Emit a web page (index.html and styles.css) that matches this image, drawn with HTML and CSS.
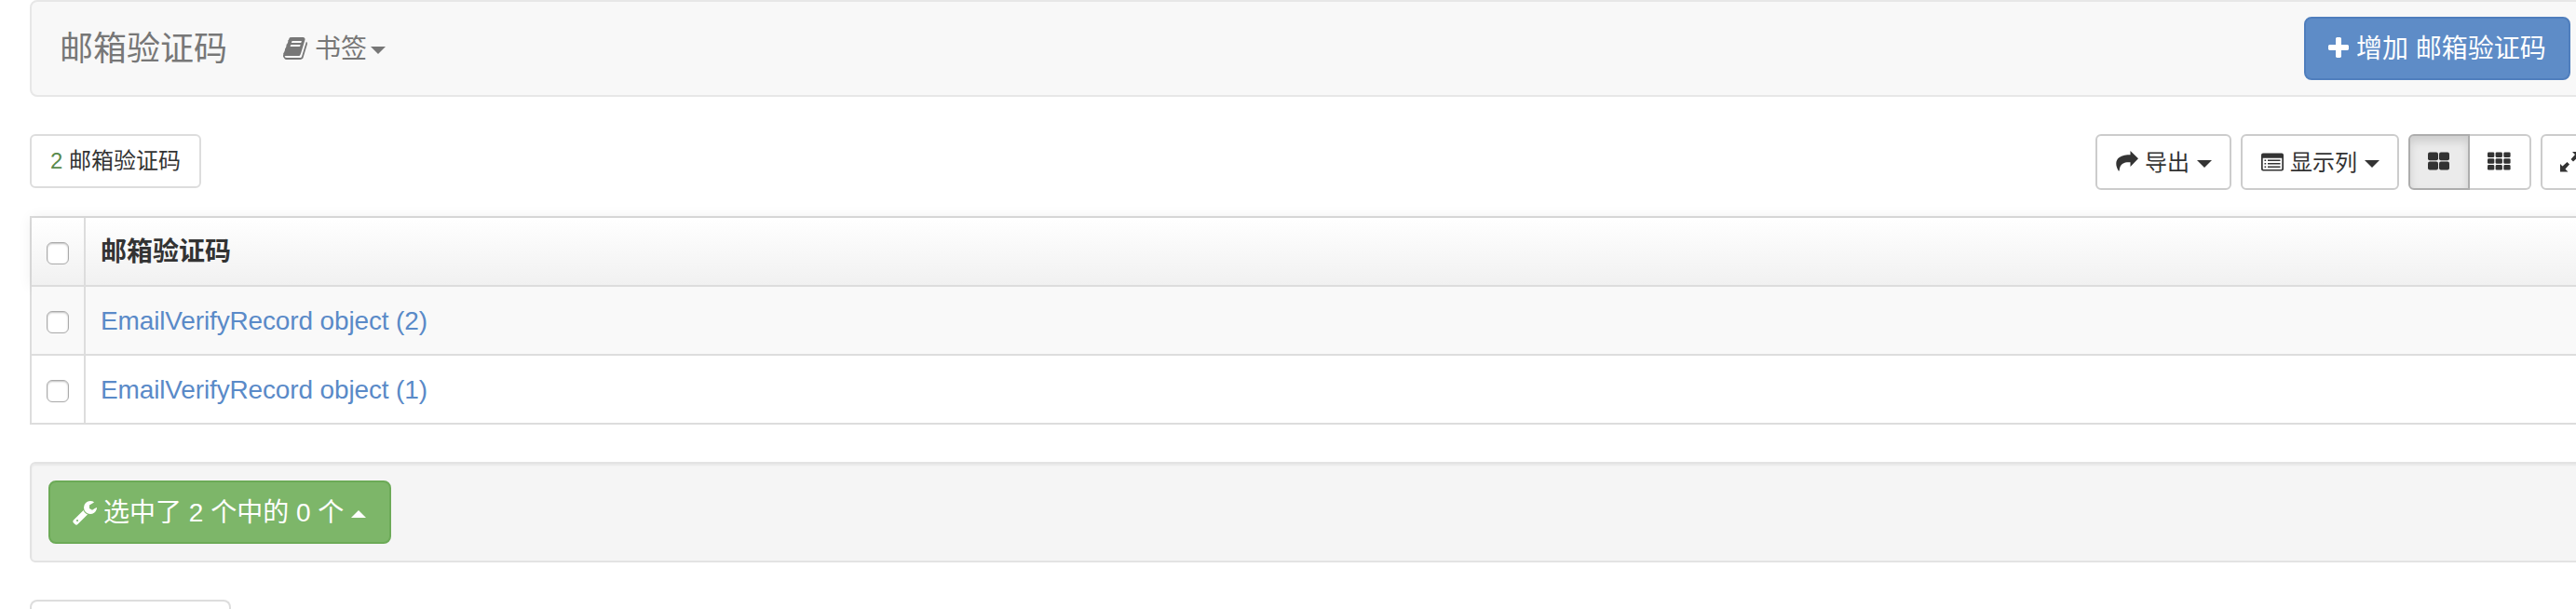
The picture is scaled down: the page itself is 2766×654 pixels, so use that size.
FILE: index.html
```html
<!DOCTYPE html>
<html lang="zh-CN">
<head>
<meta charset="utf-8">
<title>邮箱验证码</title>
<link rel="stylesheet" href="styles.css">
</head>
<body>
<div class="page">
  <nav class="navbar">
    <span class="brand">邮箱验证码</span>
    <a class="bookmark">
      <svg class="icon-lg" viewBox="0 0 1792 1792"><path d="M1639 478q40 57 18 129l-275 906q-19 64-76.5 107.5t-122.5 43.5h-923q-77 0-148.5-53.5t-99.5-131.5q-24-67-2-127 0-4 3-27t4-37q1-8-3-21.5t-3-19.5q2-11 8-21t16.5-23.5 16.5-23.5q23-38 45-91.5t30-91.5q3-10 .5-30t-.5-28q3-11 17-28t17-23q21-36 42-92t25-90q1-9-2.500-32t.5-28q4-13 22-30.500t22-22.500q19-26 42.500-84.500t27.500-96.500q1-8-3-25.500t-2-26.500q2-8 9-18t18-23 17-21q8-12 16.500-30.500t15-35 16-36 19.500-32 26.500-23.500 36-11.500 47.500 5.500l-1 3q38-9 51-9h761q74 0 114 56t18 130l-274 906q-36 119-71.500 153.500t-128.500 34.500h-869q-27 0-38 15-11 16-1 43 24 70 144 70h923q29 0 56-15.500t35-41.500l300-987q7-22 5-57 38 15 59 43zm-1064 2q-4 13 2 22.500t20 9.500h608q13 0 25.500-9.500t16.500-22.500l21-64q4-13-2-22.500t-20-9.500h-608q-13 0-25.500 9.500t-16.500 22.500zm-83 256q-4 13 2 22.500t20 9.500h608q13 0 25.500-9.500t16.500-22.500l21-64q4-13-2-22.500t-20-9.500h-608q-13 0-25.500 9.500t-16.500 22.500z"/></svg>
      <span>书签</span><i class="caret"></i>
    </a>
    <a class="btn-lg add">
      <svg class="icon-plus" viewBox="192 128 1408 1408"><path d="M1600 736v192q0 40-28 68t-68 28h-416v416q0 40-28 68t-68 28h-192q-40 0-68-28t-28-68v-416h-416q-40 0-68-28t-28-68v-192q0-40 28-68t68-28h416v-416q0-40 28-68t68-28h192q40 0 68 28t28 68v416h416q40 0 68 28t28 68z"/></svg>
      <span>增加 邮箱验证码</span>
    </a>
  </nav>

  <div class="toolbar">
    <div class="count"><span class="num">2</span> 邮箱验证码</div>
    <div class="tools">
      <a class="btn export">
        <svg class="icon" viewBox="0 0 24 22"><path d="M15.500 4.300V0L24 8.300 15.500 17v-4.700C9.500 12 4.200 13 3.600 21.500H2.800C-.5 16-.8 10.500 3.300 7.200 6.500 4.700 11.500 4.300 15.500 4.300z"/></svg>
        <span>导出</span><i class="caret"></i>
      </a>
      <a class="btn columns">
        <svg class="icon" viewBox="0 0 24 22"><path fill-rule="evenodd" d="M2 1.500h20a2 2 0 0 1 2 2v15a2 2 0 0 1-2 2H2a2 2 0 0 1-2-2v-15a2 2 0 0 1 2-2zM1.700 6.800v11.400q0 .8.8.8h19q.8 0 .8-.8V6.800z"/><path d="M3.500 8.500h1.700v1.500H3.500zM7 8.500h13.500v1.500H7zM3.500 12h1.700v1.500H3.500zM7 12h13.500v1.500H7zM3.500 15.500h1.700V17H3.500zM7 15.500h13.500V17H7z"/></svg>
        <span>显示列</span><i class="caret"></i>
      </a>
      <div class="group">
        <a class="btn square active">
          <svg class="icon-grid" viewBox="0 0 24 20"><rect x="0" y=".5" width="11" height="8.700" rx="2"/><rect x="12" y=".5" width="11" height="8.700" rx="2"/><rect x="0" y="10.500" width="11" height="9" rx="2"/><rect x="12" y="10.500" width="11" height="9" rx="2"/></svg>
        </a>
        <a class="btn square">
          <svg class="icon-grid" viewBox="0 0 24 20"><rect x="0" y=".5" width="7.300" height="5.500" rx="1.300"/><rect x="8.600" y=".5" width="7.300" height="5.500" rx="1.300"/><rect x="17.300" y=".5" width="7.300" height="5.500" rx="1.300"/><rect x="0" y="7.300" width="7.300" height="5.500" rx="1.300"/><rect x="8.600" y="7.300" width="7.300" height="5.500" rx="1.300"/><rect x="17.300" y="7.300" width="7.300" height="5.500" rx="1.300"/><rect x="0" y="14.100" width="7.300" height="5.500" rx="1.300"/><rect x="8.600" y="14.100" width="7.300" height="5.500" rx="1.300"/><rect x="17.300" y="14.100" width="7.300" height="5.500" rx="1.300"/></svg>
        </a>
      </div>
      <a class="btn square">
        <svg class="icon-expand" viewBox="0 0 22 22"><path d="M0 13l2.500 2.500 5-4.500 2.500 2.500-4.500 5L8.500 21.500H0zM21.500 0v8.500L19 6l-5 4.500L11.500 8 16 3 13 0z"/></svg>
      </a>
    </div>
  </div>

  <table class="results">
    <thead>
      <tr><th class="check"><input type="checkbox"></th><th>邮箱验证码</th></tr>
    </thead>
    <tbody>
      <tr class="odd"><td class="check"><input type="checkbox"></td><td><a>EmailVerifyRecord object (2)</a></td></tr>
      <tr><td class="check"><input type="checkbox"></td><td><a>EmailVerifyRecord object (1)</a></td></tr>
    </tbody>
  </table>

  <div class="well">
    <a class="btn-lg actions">
      <svg class="icon-lg" viewBox="0 0 1792 1792"><path d="M448 1472q0-26-19-45t-45-19-45 19-19 45 19 45 45 19 45-19 19-45zm644-420l-682 682q-37 37-90 37-52 0-91-37l-106-108q-38-36-38-90 0-53 38-91l681-681q39 98 114.500 173.500t173.500 114.500zm634-435q0 39-23 106-47 134-164.500 217.500t-258.500 83.500q-185 0-316.500-131.500t-131.500-316.500 131.500-316.500 316.500-131.500q58 0 121.500 16.500t107.500 46.500q16 11 16 28t-16 28l-293 169v224l193 107q5-3 79-48.500t135.500-81 70.500-35.500q15 0 23.500 10t8.500 25z"/></svg>
      <span>选中了 2 个中的 0 个</span><i class="caret up"></i>
    </a>
  </div>

  <div class="pager"></div>
</div>
</body>
</html>
```
FILE: styles.css
```css
* { box-sizing: border-box; }
html, body { margin: 0; height: 654px; overflow: hidden; background: #fff; }
body {
  font: 28px/40px "Liberation Sans", "Noto Sans CJK SC", sans-serif;
  color: #333;
}
svg { fill: currentColor; flex: none; display: block; }
span { white-space: nowrap; }
.page { width: 2762px; margin-left: 32px; }

.navbar {
  display: flex;
  align-items: center;
  height: 104px;
  padding: 0 32px 0 30px;
  border: 2px solid #e7e7e7;
  border-radius: 8px;
  background: #f8f8f8;
  color: #777;
}
.brand { font-size: 36px; width: 240px; padding-top: 1px; }
.bookmark { display: flex; align-items: center; }
.icon-lg { width: 28px; height: 28px; }
.bookmark span { margin-left: 6px; padding-top: 2px; }
.caret {
  border: 8px solid transparent;
  border-top-color: currentColor;
  border-bottom: 0;
}
.caret.up { border-top: 0; border-bottom: 8px solid currentColor; }
.bookmark .caret { margin: 4px 0 0 4px; }

.btn-lg {
  display: flex;
  align-items: center;
  height: 68px;
  border: 2px solid;
  border-radius: 8px;
}
.btn-lg span { color: #fff; padding-top: 2px; }
.btn-lg svg, .btn-lg .caret { color: #fff; }
.add { width: 286px; margin-left: auto; padding-left: 24px; background: #5e8cc7; border-color: #4f7ebd; }
.icon-plus { width: 22px; height: 22px; margin-bottom: 2px; }
.add span { margin-left: 8px; }

.toolbar { display: flex; justify-content: space-between; align-items: flex-start; margin-top: 40px; }
.count {
  width: 184px;
  height: 58px;
  padding: 7px 20px;
  border: 2px solid #ddd;
  border-radius: 6px;
  font-size: 24px;
  white-space: nowrap;
}
.num { color: #5a8a4c; }
.tools { display: flex; gap: 10px; }
.btn {
  display: flex;
  align-items: center;
  height: 60px;
  padding-left: 20px;
  border: 2px solid #ccc;
  border-radius: 6px;
  background: #fff;
  font-size: 24px;
}
.btn span { margin: 0 8px 0 7px; padding-top: 1px; }
.btn .caret { margin-top: 4px; }
.export { width: 146px; }
.export .icon { margin-bottom: 2px; }
.columns { width: 170px; }
.icon { width: 24px; height: 22px; }
.group { display: flex; }
.square { width: 66px; padding: 0 0 0 19px; }
.group .square + .square { width: 68px; margin-left: -2px; padding-left: 19px; border-radius: 0 6px 6px 0; border-left-color: transparent; }
.group .active {
  position: relative;
  z-index: 1;
  border-color: #adadad;
  border-radius: 6px 0 0 6px;
  background: #ebebeb;
  box-shadow: inset 0 6px 10px rgba(0, 0, 0, .125);
}
.icon-grid { width: 24px; height: 20px; overflow: visible; margin-bottom: 2px; }
.icon-expand { width: 22px; height: 22px; }

.results {
  width: 100%;
  margin-top: 28px;
  border-collapse: separate;
  border-spacing: 0;
  border: 2px solid #ddd;
  border-width: 2px 0 0 2px;
}
.results th, .results td {
  height: 74px;
  padding: 2px 16px 0;
  border: 2px solid #ddd;
  border-width: 0 2px 2px 0;
  text-align: left;
}
.results thead { box-shadow: 0 0 14px rgba(0, 0, 0, .08); }
.results th { background: linear-gradient(#fff, #f1f1f1); }
.results .check { width: 58px; padding: 4px 0 0 16px; }
.results .odd td { background: #f9f9f9; }
.results a { color: #5a8ac8; letter-spacing: -.14px; }
input {
  display: block;
  appearance: none;
  width: 24px;
  height: 24px;
  margin: 0;
  border: 1px solid #aaa;
  border-radius: 6px;
  background: #fff;
  box-shadow: inset 0 1px 2px rgba(0, 0, 0, .25);
}

.well {
  height: 108px;
  margin-top: 40px;
  padding: 18px;
  border: 2px solid #e3e3e3;
  border-radius: 6px;
  background: #f5f5f5;
  box-shadow: inset 0 2px 2px rgba(0, 0, 0, .05);
}
.actions { width: 368px; padding-left: 23px; background: #7db669; border-color: #6caa57; }
.actions span { margin-left: 6px; }
.actions .caret { margin: 4px 0 0 8px; }
.pager { width: 216px; height: 10px; margin-top: 40px; border: 2px solid #ddd; border-bottom: 0; border-radius: 8px 8px 0 0; }
```
